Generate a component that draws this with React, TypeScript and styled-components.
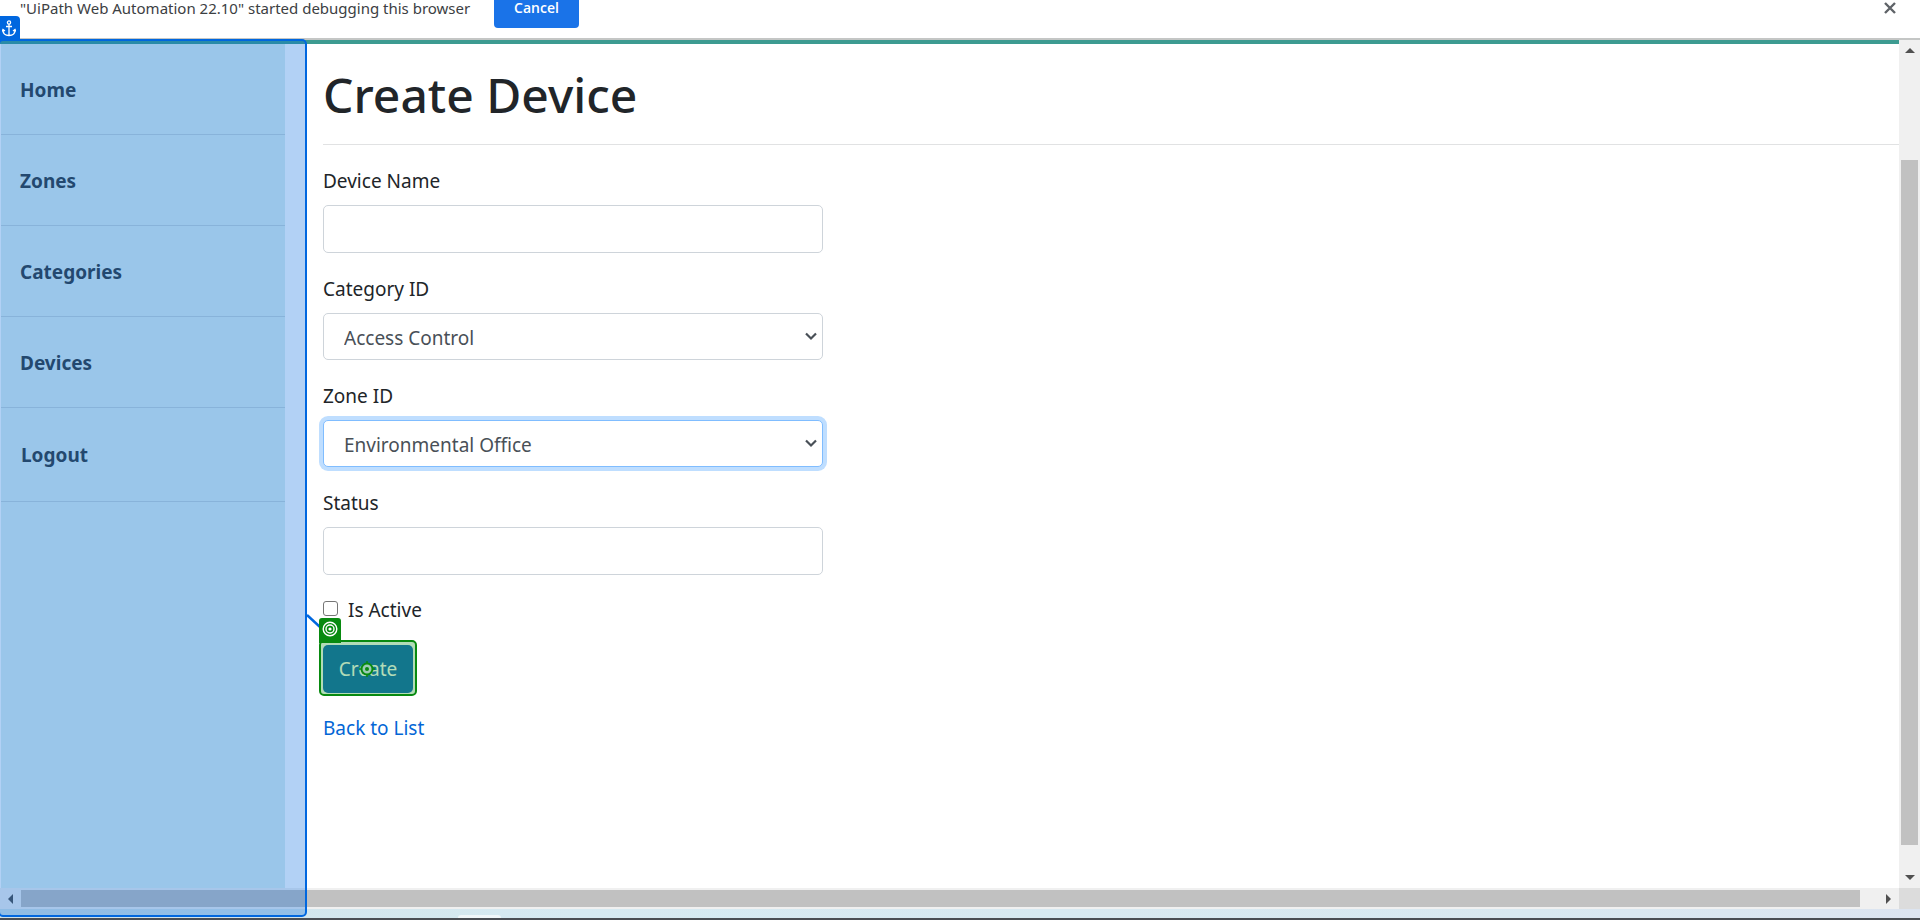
import React from "react";
import styled, { createGlobalStyle } from "styled-components";

const GlobalStyle = createGlobalStyle`
  *, *::before, *::after { box-sizing: border-box; }
  html, body, #root { height: 100%; }
  body {
    margin: 0;
    overflow: hidden;
    background: #fff;
    color: #212529;
    font-family: "Noto Sans", "Open Sans", sans-serif;
    font-size: 19px;
    line-height: 30px;
  }
`;

const Screen = styled.div`
  position: relative;
  display: flex;
  flex-direction: column;
  height: 100vh;
  overflow: hidden;
`;

const InfoBar = styled.header`
  display: flex;
  align-items: flex-end;
  flex: none;
  height: 40px;
  padding: 0 22px 10px 20px;
  border-bottom: 2px solid #c4c6c5;
  background: #fff;
  color: #3c4043;
  font-size: 15px;
  line-height: 36px;
`;

const InfoText = styled.span`
  flex: none;
  min-width: 459px;
  margin-bottom: 2px;
`;

const CancelButton = styled.button`
  flex: none;
  width: 85px;
  height: 40px;
  margin-left: 15px;
  padding: 0;
  border: 0;
  border-radius: 4px;
  background: #1a73e8;
  color: #fff;
  font: 600 14px/38px "Open Sans", "Noto Sans", sans-serif;
`;

const CloseButton = styled.button`
  display: flex;
  margin-left: auto;
  padding: 0 0 13px;
  border: 0;
  background: none;
`;

const Viewport = styled.div`
  display: grid;
  flex: 1;
  grid-template-columns: minmax(0, 1fr) 21px;
  grid-template-rows: minmax(0, 1fr) 21px;
  min-height: 0;
`;

const Page = styled.div`
  display: flex;
  min-height: 0;
  border-top: 4px solid #3d9b91;
`;

const Sidebar = styled.nav`
  flex: none;
  width: 284px;
  margin: 0 38px 0 1px;
  background: #ddf0ef;
`;

const NavLink = styled.a`
  display: block;
  padding: 31px 0 29px 19px;
  border-bottom: 1px solid #c3d5d8;
  color: #333b40;
  font-size: 19px;
  font-weight: 700;
  text-decoration: none;

  &:last-child {
    padding: 32px 0 31px 20px;
  }
`;

const Main = styled.main`
  flex: 1;
  min-width: 0;
`;

const Title = styled.h1`
  margin: 0;
  padding: 21px 0 19px;
  border-bottom: 1px solid #e1e2e3;
  font-size: 48px;
  font-weight: 500;
  line-height: 60px;
`;

const Form = styled.form`
  display: flex;
  flex-direction: column;
  align-items: flex-start;
  width: 500px;
  padding-top: 20px;
`;

const Field = styled.div`
  width: 100%;
  margin-bottom: 20px;
`;

const Label = styled.label`
  display: block;
  padding: 1px 0 9px;
`;

const controlLook = `
  display: block;
  width: 100%;
  border: 1px solid #ced4da;
  border-radius: 5px;
  outline: 0;
  background-color: #fff;
  color: #495057;
  font: inherit;
`;

const TextInput = styled.input`
  ${controlLook}
  height: 48px;
  padding: 8px 15px;
`;

const Select = styled.select<{ $active?: boolean }>`
  ${controlLook}
  height: 47px;
  padding: 2px 20px 0;
  appearance: none;
  ${(p) => p.$active && "border-color: #80bdff; box-shadow: 0 0 0 4px #bfdeff;"}
`;

const SelectBox = styled.div`
  position: relative;
`;

const Chevron = styled.svg`
  position: absolute;
  top: 19px;
  right: 6px;
  pointer-events: none;
`;

const CheckRow = styled.div`
  display: flex;
  align-items: center;
  height: 30px;
  margin-bottom: 20px;
`;

const Checkbox = styled.input`
  width: 15px;
  height: 15px;
  margin: 0 10px 3px 0;
  appearance: none;
  border: 1px solid #767676;
  border-radius: 3px;
  background: #fff;
`;

const SubmitArea = styled.div`
  position: relative;
  margin-bottom: 20px;
`;

const CreateButton = styled.button`
  display: block;
  width: 90px;
  height: 48px;
  padding: 0;
  border: 0;
  border-radius: 5px;
  background: #1b6ec2;
  color: #fff;
  font: inherit;
`;

const TargetFrame = styled.div`
  position: absolute;
  inset: -5px -4px -3px;
  border: 2px solid #088a10;
  border-radius: 5px;
  background: rgba(0, 138, 16, 0.3);
  pointer-events: none;
`;

const TargetBadge = styled.svg`
  position: absolute;
  top: -27px;
  left: -4px;
`;

const TargetPoint = styled.svg`
  position: absolute;
  top: 15px;
  left: 36px;
`;

const Connector = styled.svg`
  position: absolute;
  top: -31px;
  left: -17px;
`;

const BackLink = styled.a`
  color: #0366d6;
  text-decoration: none;
`;

const Track = styled.div<{ $vertical?: boolean }>`
  display: flex;
  flex-direction: ${(p) => (p.$vertical ? "column" : "row")};
  align-items: center;
  justify-content: space-between;
  padding: ${(p) => (p.$vertical ? "8px 0" : "0 8px")};
  background: #f0f0f0;
`;

const Thumb = styled.div<{ $vertical?: boolean }>`
  flex: 1;
  background: #c1c1c1;
  ${(p) => (p.$vertical ? "width: 17px; margin: 107px 0 30px;" : "height: 17px; margin: 0 26px 0 8px;")}
`;

const Corner = styled.div`
  background: #dcdcdc;
`;

const Desktop = styled.footer`
  display: flex;
  align-items: flex-end;
  flex: none;
  height: 11px;
  padding-left: 458px;
  border-bottom: 2px solid #4a4e54;
  background: linear-gradient(90deg, #cfe2e8, #d6eaf2 30%, #d8e8f0 80%, #dce4f0);
`;

const DesktopTab = styled.div`
  width: 43px;
  height: 3px;
  border-radius: 3px 3px 0 0;
  background: #f0f7fa;
`;

const AnchorFrame = styled.div`
  position: absolute;
  top: 39px;
  bottom: 3px;
  left: -2px;
  width: 309px;
  border: 2px solid #0067df;
  border-radius: 5px;
  background: rgba(0, 103, 223, 0.3);
  pointer-events: none;
`;

const AnchorBadge = styled.div`
  position: absolute;
  top: 16px;
  left: 0;
  display: flex;
  align-items: center;
  justify-content: center;
  width: 20px;
  height: 24px;
  padding-right: 3px;
  border-radius: 0 4px 0 0;
  background: #0067df;
`;

function Arrow({ points, w, h }: { points: string; w: number; h: number }) {
  return (
    <svg width={w} height={h} aria-hidden="true">
      <polygon points={points} fill="#505050" />
    </svg>
  );
}

function SelectField({ id, label, value, active }: { id: string; label: string; value: string; active?: boolean }) {
  return (
    <Field>
      <Label htmlFor={id}>{label}</Label>
      <SelectBox>
        <Select id={id} defaultValue={value} $active={active}>
          <option>{value}</option>
        </Select>
        <Chevron width="12" height="9" viewBox="0 0 12 9" aria-hidden="true">
          <path d="M1 1.5l5 5 5-5" fill="none" stroke="#495057" strokeWidth="2.2" />
        </Chevron>
      </SelectBox>
    </Field>
  );
}

function TextField({ id, label }: { id: string; label: string }) {
  return (
    <Field>
      <Label htmlFor={id}>{label}</Label>
      <TextInput id={id} type="text" />
    </Field>
  );
}

export default function App() {
  return (
    <Screen>
      <GlobalStyle />
      <InfoBar>
        <InfoText>"UiPath Web Automation 22.10" started debugging this browser</InfoText>
        <CancelButton type="button">Cancel</CancelButton>
        <CloseButton type="button" aria-label="Close">
          <svg width="16" height="14" viewBox="0 0 16 14" aria-hidden="true">
            <path d="M3 2l10 10M13 2L3 12" stroke="#5f6368" strokeWidth="2.4" />
          </svg>
        </CloseButton>
      </InfoBar>
      <Viewport>
        <Page>
          <Sidebar>
            {["Home", "Zones", "Categories", "Devices", "Logout"].map((name) => (
              <NavLink key={name} href="#">
                {name}
              </NavLink>
            ))}
          </Sidebar>
          <Main>
            <Title>Create Device</Title>
            <Form>
              <TextField id="name" label="Device Name" />
              <SelectField id="category" label="Category ID" value="Access Control" />
              <SelectField id="zone" label="Zone ID" value="Environmental Office" active />
              <TextField id="status" label="Status" />
              <CheckRow>
                <Checkbox id="active" type="checkbox" />
                <label htmlFor="active">Is Active</label>
              </CheckRow>
              <SubmitArea>
                <CreateButton type="button">Create</CreateButton>
                <TargetFrame />
                <Connector width="16" height="16" aria-hidden="true">
                  <path d="M1 1l13 12" stroke="#0067df" strokeWidth="2.4" />
                </Connector>
                <TargetBadge width="22" height="25" aria-hidden="true">
                  <path d="M0 25V3a3 3 0 0 1 3-3h16a3 3 0 0 1 3 3v22z" fill="#088a10" />
                  <g fill="none" stroke="#fff" strokeWidth="1.4">
                    <circle cx="11" cy="11" r="6.8" />
                    <circle cx="11" cy="11" r="4" />
                  </g>
                  <circle cx="11" cy="11" r="1.6" fill="#fff" />
                </TargetBadge>
                <TargetPoint width="16" height="18" aria-hidden="true">
                  <circle cx="8" cy="9" r="5.5" fill="#9ccbb5" stroke="#088a10" strokeWidth="2" />
                  <circle cx="8" cy="9" r="2" fill="#088a10" />
                  <path d="M8 1v3M8 14v3M0 9h3M13 9h3" stroke="#088a10" strokeWidth="1.5" />
                </TargetPoint>
              </SubmitArea>
              <BackLink href="#">Back to List</BackLink>
            </Form>
          </Main>
        </Page>
        <Track $vertical>
          <Arrow w={10} h={5} points="0,5 5,0 10,5" />
          <Thumb $vertical />
          <Arrow w={10} h={5} points="0,0 5,5 10,0" />
        </Track>
        <Track>
          <Arrow w={5} h={10} points="5,0 0,5 5,10" />
          <Thumb />
          <Arrow w={5} h={10} points="0,0 5,5 0,10" />
        </Track>
        <Corner />
      </Viewport>
      <Desktop>
        <DesktopTab />
      </Desktop>
      <AnchorFrame />
      <AnchorBadge>
        <svg width="14" height="17" viewBox="0 0 14 17" fill="none" stroke="#fff" strokeWidth="1.3" aria-hidden="true">
          <circle cx="7" cy="2.5" r="1.6" />
          <path d="M7 4v11.5M4 6.5h6M1 10c0 3.5 2.5 5.5 6 5.5s6-2 6-5.5M0 11.5L1 9.5l2 1.5M14 11.5l-1-2-2 1.5" />
        </svg>
      </AnchorBadge>
    </Screen>
  );
}
